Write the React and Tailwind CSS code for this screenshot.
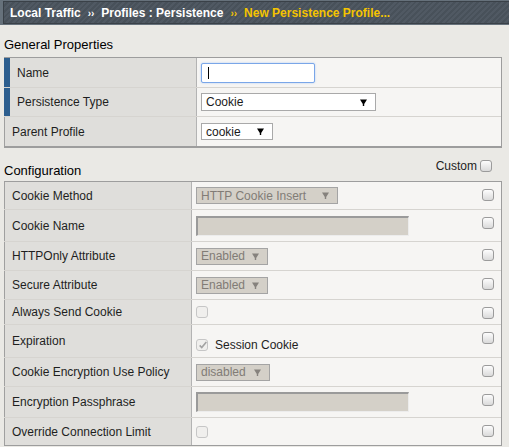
const font = { fontFamily: '"Liberation Sans", Arial, sans-serif' };

function Checkbox({ disabled, checked }) {
  const cls = disabled
    ? 'border-[#c6c6c6] bg-[#f0efed]'
    : 'border-[#9b9b9b] bg-linear-to-b from-[#fdfdfd] to-[#dadada]';
  return (
    <span className={`relative inline-block h-[12px] w-[12px] shrink-0 rounded-[3px] border ${cls}`}>
      {checked && (
        <svg viewBox="0 0 12 12" className="absolute left-[1px] top-[0px] h-[10px] w-[10px]">
          <path d="M2 6.5 L4.5 9 L10 2.5" fill="none" stroke="#a3a3a3" strokeWidth="2" />
        </svg>
      )}
    </span>
  );
}

function Arrow({ color }) {
  return (
    <svg viewBox="0 0 7 7" className="h-[7px] w-[7px]">
      <path d="M0 0.5 H7 L4.2 5 V7 H2.8 V5 Z" fill={color} />
    </svg>
  );
}

function Select({ value, width, disabled }) {
  const cls = disabled
    ? 'bg-[#d4d0c8] border-[#a4a4a4] text-[#817c76]'
    : 'bg-white border-[#a9a9a9] text-[#1a1a1a]';
  return (
    <div className={`flex h-[17px] items-center justify-between border pl-[4px] pr-[8px] text-[12px] leading-none ${cls} ${width}`}>
      <span>{value}</span>
      <Arrow color={disabled ? '#86827d' : '#000'} />
    </div>
  );
}

function DisabledInput() {
  return (
    <div className="h-[20px] w-[213px] border-t-2 border-l-2 border-b border-r border-t-[#9a9a9a] border-l-[#9a9a9a] border-b-[#ececec] border-r-[#ececec] bg-[#d4d0c8]" />
  );
}

function GeneralRow({ label, required, h, children, last }) {
  return (
    <div className={`flex ${h} ${last ? '' : 'border-b border-[#d6d4d0]'}`}>
      <div
        className={`flex w-[193px] shrink-0 items-center border-r border-r-[#b3b3b3] bg-[#dfdedb] pl-[7px] ${
          required ? 'border-l-[6px] border-l-[#2d5e8e]' : 'border-l border-l-[#a0a0a0]'
        }`}
      >
        {label}
      </div>
      <div className="flex flex-1 items-center bg-[#f6f5f3] pl-[4px]">{children}</div>
    </div>
  );
}

function ConfigRow({ label, h, children, last, valueClass = 'items-center' }) {
  return (
    <div className={`flex ${h} ${last ? '' : 'border-b border-[#d6d4d0]'}`}>
      <div className="flex w-[188px] shrink-0 items-center border-l border-r border-l-[#a0a0a0] border-r-[#b3b3b3] bg-[#dfdedb] pl-[7px]">
        {label}
      </div>
      <div className={`flex flex-1 bg-[#f6f5f3] pl-[4px] ${valueClass}`}>{children}</div>
      <div className="w-[26px] shrink-0 bg-[#f6f5f3] pl-[7px] pt-[6px]">
        <Checkbox />
      </div>
    </div>
  );
}

export default function App() {
  const configRows = [
    ['Cookie Method', 'h-[28px]', <Select value="HTTP Cookie Insert" width="w-[142px]" disabled />],
    ['Cookie Name', 'h-[32px]', <DisabledInput />],
    ['HTTPOnly Attribute', 'h-[29px]', <Select value="Enabled" width="w-[72px]" disabled />],
    ['Secure Attribute', 'h-[29px]', <Select value="Enabled" width="w-[72px]" disabled />],
    ['Always Send Cookie', 'h-[25px]', <Checkbox disabled />],
  ];

  return (
    <div className="min-h-[447px] w-[509px] bg-[#eae9e5] text-[12px] text-[#1e1e1e]" style={font}>
      {/* breadcrumb */}
      <div className="h-[25px] bg-[#66717b] pl-[3px] pt-[1px]">
        <div className="flex h-[23px] items-center gap-[7px] border border-r-0 border-[#3a4148] bg-[repeating-linear-gradient(135deg,#505963_0px,#505963_2px,#48515a_2px,#48515a_4px)] pl-[6px] text-[12px] font-bold text-white">
          <span>Local Traffic</span>
          <span className="pt-[2px] text-[10px]">››</span>
          <span>Profiles : Persistence</span>
          <span className="pt-[2px] text-[10px] text-[#f5c400]">››</span>
          <span className="text-[#f5c400]">New Persistence Profile...</span>
        </div>
      </div>

      <div className="px-[4px] pr-[7px]">
        <div className="pt-[12px] pb-[5px] text-[13px] leading-[15px] text-black">General Properties</div>

        <div className="border-t border-r border-b-2 border-[#9d9d9d]">
          <GeneralRow label="Name" required h="h-[30px]">
            <div className="relative h-[20px] w-[114px] rounded-[2px] border border-[#7aa6e8] bg-white shadow-[0_0_2px_#a8c8f5]">
              <span className="absolute left-[6px] top-[3px] h-[12px] w-px bg-black" />
            </div>
          </GeneralRow>
          <GeneralRow label="Persistence Type" required h="h-[29px]">
            <Select value="Cookie" width="w-[175px] h-[18px]" />
          </GeneralRow>
          <GeneralRow label="Parent Profile" h="h-[29px]" last>
            <Select value="cookie" width="w-[72px]" />
          </GeneralRow>
        </div>

        <div className="flex h-[33px] items-start justify-between">
          <div className="mt-[15px] text-[13px] leading-[15px] text-black">Configuration</div>
          <div className="mr-[10px] mt-[9px] flex items-center gap-[3px]">
            <span>Custom</span>
            <Checkbox />
          </div>
        </div>

        <div className="border-t border-r border-b border-[#9d9d9d]">
          {configRows.map(([label, h, ctrl]) => (
            <ConfigRow key={label} label={label} h={h}>
              {ctrl}
            </ConfigRow>
          ))}
          <ConfigRow label="Expiration" h="h-[33px]">
            <div className="flex items-center gap-[7px] pt-[7px]">
              <Checkbox disabled checked />
              <span>Session Cookie</span>
            </div>
          </ConfigRow>
          <ConfigRow label="Cookie Encryption Use Policy" h="h-[29px]">
            <Select value="disabled" width="w-[74px]" disabled />
          </ConfigRow>
          <ConfigRow label="Encryption Passphrase" h="h-[31px]">
            <DisabledInput />
          </ConfigRow>
          <ConfigRow label="Override Connection Limit" h="h-[27px]" last>
            <Checkbox disabled />
          </ConfigRow>
        </div>
      </div>
    </div>
  );
}
